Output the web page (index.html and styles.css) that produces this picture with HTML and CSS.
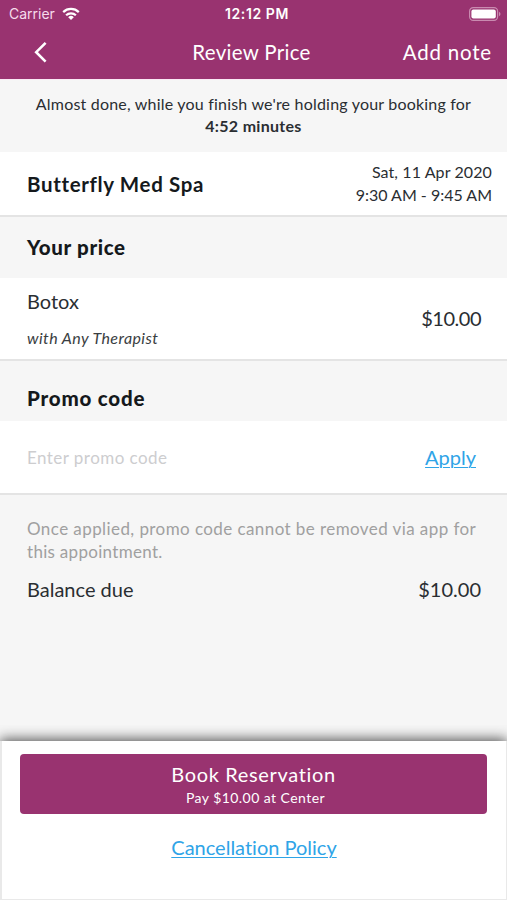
FILE: index.html
```html
<!DOCTYPE html>
<html lang="en">
<head>
<meta charset="utf-8">
<title>Review Price</title>
<link rel="stylesheet" href="styles.css">
</head>
<body>
<div class="screen">
  <header class="top">
    <div class="status">
      <div class="carrier"><span>Carrier</span>
        <svg width="18" height="14" viewBox="0 0 18 14" fill="none" stroke="#fff" stroke-width="2.2"><path d="M1.2 5.1a11.2 11.2 0 0 1 15.6 0M4.1 8.3a7 7 0 0 1 9.8 0"/><path d="M9 13L6.2 10.2a4 4 0 0 1 5.6 0z" fill="#fff" stroke="none"/></svg>
      </div>
      <div class="clock">12:12 PM</div>
      <svg class="battery" width="32" height="14" viewBox="0 0 32 14"><rect x=".6" y=".6" width="28" height="12.8" rx="3.6" fill="none" stroke="#c98bb0" stroke-width="1.2"/><rect x="2.4" y="2.4" width="24.4" height="9.2" rx="2" fill="#fff"/><path d="M30 4.8q1.5.8 1.5 2.2t-1.5 2.2z" fill="#c98bb0"/></svg>
    </div>
    <nav class="nav">
      <svg class="back" width="14" height="22" viewBox="0 0 14 22" fill="none" stroke="#fff" stroke-width="2.6"><path d="M12.6 1.8L3.2 11.2 12.6 20.6"/></svg>
      <h1 class="title">Review Price</h1>
      <span class="note">Add note</span>
    </nav>
  </header>
  <section class="hold"><p class="hold-text">Almost done, while you finish we're holding your booking for</p><p class="hold-time">4:52 minutes</p></section>
  <section class="row venue">
    <h2 class="venue-name">Butterfly Med Spa</h2>
    <div class="when"><div class="date">Sat, 11 Apr 2020</div><div class="time">9:30 AM - 9:45 AM</div></div>
  </section>
  <h2 class="heading price-heading">Your price</h2>
  <section class="row service">
    <div><div class="service-name">Botox</div><div class="therapist">with Any Therapist</div></div>
    <div class="amount">$10.00</div>
  </section>
  <h2 class="heading promo-heading">Promo code</h2>
  <section class="row promo"><span class="placeholder">Enter promo code</span><a class="apply link">Apply</a></section>
  <section class="summary">
    <p class="hint"><span class="hint-one">Once applied, promo code cannot be removed via app for</span><br><span class="hint-two">this appointment.</span></p>
    <div class="balance"><span class="balance-label">Balance due</span><span class="balance-amount">$10.00</span></div>
  </section>
  <footer class="footer">
    <div class="book"><span class="book-title">Book Reservation</span><span class="book-sub">Pay $10.00 at Center</span></div>
    <a class="policy link">Cancellation Policy</a>
  </footer>
</div>
</body>
</html>
```
FILE: styles.css
```css
* { box-sizing: border-box; }
body, h1, h2, p { margin: 0; }
body { font-family: Lato, sans-serif; font-variant-ligatures: none; color: #2a2e32; background: #f6f6f6; }
.screen { width: 507px; height: 900px; overflow: hidden; display: flex; flex-direction: column; white-space: nowrap; background: #f6f6f6; }
.top { flex: none; height: 80px; background: #993370; color: #fff; border-bottom: 1px solid #fbeaf5; }
.status { height: 27px; display: grid; grid-template-columns: 1fr auto 1fr; align-items: center; padding: 0 6px 0 9px; font: 14px/20px Inter, sans-serif; }
.carrier { display: flex; align-items: center; gap: 7px; color: #f6dcec; }
.clock { font-weight: 600; padding-left: 4px; letter-spacing: .6px; }
.battery { justify-self: end; }
.nav { height: 50px; display: grid; grid-template-columns: 1fr auto 1fr; align-items: center; padding: 0 15px 0 33px; }
.title { font-size: 20.5px; font-weight: 400; letter-spacing: .3px; margin-right: 22px; margin-top: -1px; }
.note { justify-self: end; font-size: 20.5px; letter-spacing: .8px; }
.hold { flex: none; height: 72px; padding-top: 13px; text-align: center; font-size: 16px; line-height: 22px; }
.hold-text { letter-spacing: .2px; }
.hold-time { font-weight: 700; letter-spacing: .3px; }
.row { flex: none; display: flex; align-items: center; justify-content: space-between; background: #fff; border-bottom: 2px solid #e4e4e4; padding: 0 26px 0 27px; }
.venue { height: 65px; padding-right: 15px; }
.venue-name { font-size: 20.5px; font-weight: 700; letter-spacing: .65px; color: #15191c; }
.when { text-align: right; font-size: 16px; line-height: 23px; margin-top: -2px; }
.date { letter-spacing: .1px; }
.heading { flex: none; padding-left: 27px; font-size: 20.5px; font-weight: 900; height: 61px; line-height: 60px; color: #15191c; letter-spacing: .65px; }
.service { height: 83px; }
.service-name { font-size: 20px; line-height: 36px; margin-top: 1px; }
.therapist { font-size: 16px; line-height: 37px; font-style: italic; letter-spacing: .42px; color: #3a3e42; }
.amount, .balance-amount { font-size: 20px; }
.amount { letter-spacing: -.5px; margin-top: -2px; }
.promo-heading { line-height: 74px; height: 60px; letter-spacing: .8px; }
.promo { height: 74px; padding-right: 31px; }
.placeholder { color: #cdcdcf; font-size: 17px; letter-spacing: .45px; }
.link { color: #2fa4e7; font-size: 20px; text-decoration: underline; text-underline-offset: 2px; text-decoration-thickness: 1px; }
.summary { flex: 1; padding: 22px 26px 0 27px; }
.hint { color: #a0a0a0; font-size: 17px; line-height: 23px; letter-spacing: .42px; }
.hint-two { letter-spacing: .3px; }
.balance { display: flex; justify-content: space-between; line-height: 28px; margin-top: 12px; }
.balance-label { font-size: 20px; }
.footer { flex: none; height: 159px; border: solid #e9e9e9; border-width: 0 1px 1px 2px; background: #fff; box-shadow: 0 -2px 12px 0 #555; clip-path: inset(-16px 0 0 0); display: flex; flex-direction: column; align-items: center; padding-top: 13px; }
.book { width: 467px; height: 60px; border-radius: 4px; background: #993370; color: #fff; display: flex; flex-direction: column; align-items: center; padding-top: 8px; margin-right: 1px; }
.book-title { font-size: 20px; line-height: 25px; letter-spacing: .65px; }
.book-sub { font-size: 14px; line-height: 22px; letter-spacing: .45px; padding-left: 4px; }
.policy { margin-top: 20px; line-height: 26px; }
```
